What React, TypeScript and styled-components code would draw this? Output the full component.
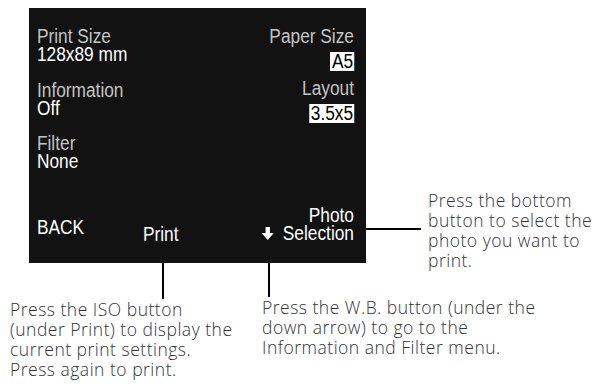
import React from "react";
import styled, { createGlobalStyle } from "styled-components";

const Global = createGlobalStyle`
  html, body { margin: 0; padding: 0; background: #ffffff; }
  body { width: 593px; height: 390px; overflow: hidden; }
`;

const Page = styled.div`
  width: 593px;
  height: 390px;
  display: flex;
  flex-direction: column;
  background: #ffffff;
`;

const TopRow = styled.div`
  display: flex;
  align-items: flex-start;
  height: 255px;
  padding: 8px 0 0 29px;
`;

/* The camera LCD: a fixed-size dark panel */
const Screen = styled.div`
  width: 337px;
  height: 255px;
  flex: none;
  overflow: hidden;
  background: #121212;
`;

/* The LCD uses a condensed face: lay out at full width, then condense horizontally */
const Display = styled.div`
  width: 389.6px;
  height: 255px;
  box-sizing: border-box;
  transform: scaleX(0.865);
  transform-origin: left top;
  padding: 19px 13.9px 20px 9.2px;
  display: flex;
  flex-direction: column;
  justify-content: space-between;
  font-family: "Liberation Sans", Arial, sans-serif;
  font-size: 20px;
  color: #ffffff;
`;

const Settings = styled.div`
  display: flex;
  justify-content: space-between;
  align-items: flex-start;
`;

const LeftColumn = styled.div`
  display: flex;
  flex-direction: column;
  gap: 17.5px;
`;

const RightColumn = styled.div`
  display: flex;
  flex-direction: column;
  align-items: flex-end;
`;

const Group = styled.div`
  display: flex;
  flex-direction: column;
`;

const Label = styled.div<{ $gap?: number }>`
  line-height: 18px;
  color: #c4c4c4;
  white-space: nowrap;
  margin-top: ${(p) => p.$gap ?? 0}px;
`;

const Value = styled.div`
  line-height: 18px;
  color: #ffffff;
  white-space: nowrap;
`;

const Selected = styled.div`
  line-height: 19px;
  height: 19px;
  margin-top: 6.5px;
  padding: 0 1px 0 2px;
  background: #ffffff;
  color: #000000;
  white-space: nowrap;
`;

const BottomBar = styled.div`
  display: grid;
  grid-template-columns: 122.5px auto 1fr;
  align-items: end;
`;

const SoftKey = styled.div<{ $lift?: number }>`
  line-height: 18px;
  white-space: nowrap;
  color: #ffffff;
  margin-bottom: ${(p) => p.$lift ?? 0}px;
`;

const PhotoKey = styled.div`
  display: flex;
  flex-direction: column;
  align-items: flex-end;
  line-height: 18px;
  margin-bottom: 1px;
`;

const KeyLine = styled.div`
  display: flex;
  align-items: center;
  gap: 10px;
  white-space: nowrap;
`;

const SideCallout = styled.div`
  display: flex;
  align-items: flex-start;
  margin-top: 182px;
`;

const HLine = styled.div`
  width: 55px;
  height: 2px;
  margin-top: 38px;
  background: #000000;
  flex: none;
`;

const CalloutText = styled.div`
  font-family: "Open Sans", "Liberation Sans", sans-serif;
  font-weight: 300;
  font-size: 17.5px;
  letter-spacing: 0.5px;
  line-height: 20px;
  color: #333333;
  white-space: nowrap;
`;

const SideText = styled(CalloutText)`
  margin-left: 7px;
`;

const BottomRow = styled.div`
  display: flex;
  align-items: flex-start;
`;

const BottomCallout = styled.div<{ $start: number; $width?: number }>`
  display: flex;
  flex-direction: column;
  margin-left: ${(p) => p.$start}px;
  width: ${(p) => (p.$width ? `${p.$width}px` : "auto")};
`;

const VLine = styled.div<{ $offset: number; $length: number }>`
  width: 2px;
  height: ${(p) => p.$length}px;
  margin-left: ${(p) => p.$offset}px;
  background: #000000;
`;

const DownArrow = () => (
  <svg width="14" height="13" viewBox="0 0 14 13" aria-hidden="true">
    <rect x="4.5" y="0" width="5" height="7" fill="#ffffff" />
    <polygon points="0,6 14,6 7,13" fill="#ffffff" />
  </svg>
);

export default function App() {
  return (
    <>
      <Global />
      <Page>
        <TopRow>
          <Screen>
            <Display>
              <Settings>
                <LeftColumn>
                  <Group>
                    <Label>Print Size</Label>
                    <Value>128x89 mm</Value>
                  </Group>
                  <Group>
                    <Label>Information</Label>
                    <Value>Off</Value>
                  </Group>
                  <Group>
                    <Label>Filter</Label>
                    <Value>None</Value>
                  </Group>
                </LeftColumn>
                <RightColumn>
                  <Label>Paper Size</Label>
                  <Selected>A5</Selected>
                  <Label $gap={8.5}>Layout</Label>
                  <Selected>3.5x5</Selected>
                </RightColumn>
              </Settings>
              <BottomBar>
                <SoftKey $lift={7}>BACK</SoftKey>
                <SoftKey>Print</SoftKey>
                <PhotoKey>
                  <div>Photo</div>
                  <KeyLine>
                    <DownArrow />
                    <span>Selection</span>
                  </KeyLine>
                </PhotoKey>
              </BottomBar>
            </Display>
          </Screen>
          <SideCallout>
            <HLine />
            <SideText>
              Press the bottom
              <br />
              button to select the
              <br />
              photo you want to
              <br />
              print.
            </SideText>
          </SideCallout>
        </TopRow>
        <BottomRow>
          <BottomCallout $start={10} $width={252}>
            <VLine $offset={152} $length={36} />
            <CalloutText>
              Press the ISO button
              <br />
              (under Print) to display the
              <br />
              current print settings.
              <br />
              Press again to print.
            </CalloutText>
          </BottomCallout>
          <BottomCallout $start={0}>
            <VLine $offset={6} $length={34} />
            <CalloutText>
              Press the W.B. button (under the
              <br />
              down arrow) to go to the
              <br />
              Information and Filter menu.
            </CalloutText>
          </BottomCallout>
        </BottomRow>
      </Page>
    </>
  );
}
